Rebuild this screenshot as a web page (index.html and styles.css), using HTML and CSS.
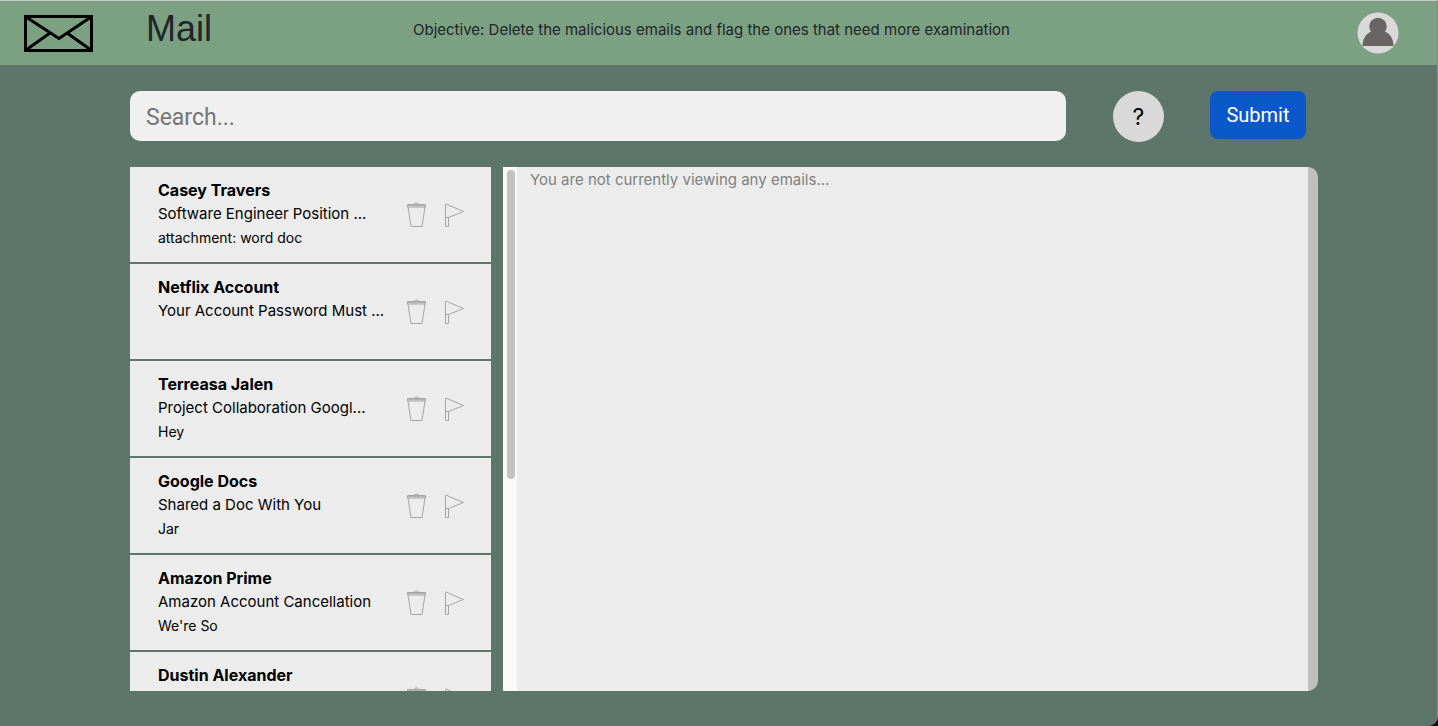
FILE: index.html
```html
<!DOCTYPE html>
<html lang="en">
<head>
<meta charset="utf-8">
<title>Mail</title>
<link rel="stylesheet" href="styles.css">
</head>
<body>
<svg class="sprite" aria-hidden="true">
  <symbol id="trash" viewBox="0 0 20 26">
    <path d="M.5 2.500H18.500V5H.5ZM7 2.500C7.500 .5 11.500 .5 12 2.500M1 5L4 24.500H15L18 5M.5 3.700H18.500"/>
  </symbol>
  <symbol id="flag" viewBox="0 0 20 26">
    <path d="M.5 2.500Q2 1 3 3L18.500 9.500L3.500 15.500V24.500H.5ZM.5 15.500H3.500"/>
  </symbol>
</svg>
<header class="topbar">
  <svg class="logo" viewBox="0 0 70 38" role="img" aria-label="Mail logo">
    <path d="M2.500 2.500H68.500V36.500H2.500Z" stroke-width="3"/>
    <path d="M3 3L36 24.500L68 3M3 36L27 19M68 36L44 19" stroke-width="3"/>
  </svg>
  <h1 class="title">Mail</h1>
  <p class="objective">Objective: Delete the malicious emails and flag the ones that need more examination</p>
  <svg class="avatar" viewBox="0 0 42 42" role="img" aria-label="Profile">
    <circle cx="21" cy="21" r="20.500" fill="#d9d9d9"/>
    <circle cx="21" cy="14.500" r="8.700" fill="#696464"/>
    <path d="M5.500 34C5.500 25 11 19.500 16 19.500H26C31 19.500 36.500 25 36.500 34Z" fill="#696464"/>
  </svg>
</header>
<main class="page">
  <form class="tools">
    <input class="search" type="text" placeholder="Search..." aria-label="Search">
    <button class="help" type="button">?</button>
    <button class="submit" type="button">Submit</button>
  </form>
  <div class="mailbox">
    <ul class="list">
      <li class="mail"><div class="text"><h2 class="sender">Casey Travers</h2><p class="subject">Software Engineer Position ...</p><p class="preview">attachment: word doc</p></div><button class="action" type="button" aria-label="Delete"><svg class="icon"><use href="#trash"/></svg></button><button class="action" type="button" aria-label="Flag"><svg class="icon"><use href="#flag"/></svg></button></li>
      <li class="mail"><div class="text"><h2 class="sender">Netflix Account</h2><p class="subject">Your Account Password Must ...</p><p class="preview"></p></div><button class="action" type="button" aria-label="Delete"><svg class="icon"><use href="#trash"/></svg></button><button class="action" type="button" aria-label="Flag"><svg class="icon"><use href="#flag"/></svg></button></li>
      <li class="mail"><div class="text"><h2 class="sender">Terreasa Jalen</h2><p class="subject">Project Collaboration Googl...</p><p class="preview">Hey</p></div><button class="action" type="button" aria-label="Delete"><svg class="icon"><use href="#trash"/></svg></button><button class="action" type="button" aria-label="Flag"><svg class="icon"><use href="#flag"/></svg></button></li>
      <li class="mail"><div class="text"><h2 class="sender">Google Docs</h2><p class="subject">Shared a Doc With You</p><p class="preview">Jar</p></div><button class="action" type="button" aria-label="Delete"><svg class="icon"><use href="#trash"/></svg></button><button class="action" type="button" aria-label="Flag"><svg class="icon"><use href="#flag"/></svg></button></li>
      <li class="mail"><div class="text"><h2 class="sender">Amazon Prime</h2><p class="subject">Amazon Account Cancellation</p><p class="preview">We're So</p></div><button class="action" type="button" aria-label="Delete"><svg class="icon"><use href="#trash"/></svg></button><button class="action" type="button" aria-label="Flag"><svg class="icon"><use href="#flag"/></svg></button></li>
      <li class="mail"><div class="text"><h2 class="sender">Dustin Alexander</h2></div><button class="action" type="button" aria-label="Delete"><svg class="icon"><use href="#trash"/></svg></button><button class="action" type="button" aria-label="Flag"><svg class="icon"><use href="#flag"/></svg></button></li>
    </ul>
    <div class="track"><div class="thumb"></div></div>
    <section class="viewer"><p class="empty">You are not currently viewing any emails...</p></section>
  </div>
</main>
</body>
</html>
```
FILE: styles.css
```css
* { box-sizing: border-box; }
html { background: #10101c; }
body {
  display: flex;
  flex-direction: column;
  height: 100vh;
  margin: 0;
  overflow: hidden;
  background: #5e756b;
  border-top: 1px solid #c5cac6;
  border-right: 1px solid #7c9087;
  border-bottom-right-radius: 10px;
  color: #000;
  font-family: Inter, "Liberation Sans", sans-serif;
  font-size: 15px;
  line-height: 24px;
}
h1, h2, p, ul { margin: 0; padding: 0; }
button { padding: 0; border: 0; font: inherit; cursor: pointer; }
.sprite { position: absolute; width: 0; height: 0; }
.topbar {
  display: flex;
  align-items: flex-start;
  flex: none;
  height: 64px;
  padding: 0 38px 0 23px;
  background: #7ba082;
  color: #212529;
}
.logo { width: 70px; height: 38px; margin-top: 13px; fill: none; stroke: #000; }
.title { width: 267px; padding: 6px 0 0 53px; font-family: "Liberation Sans", sans-serif; font-size: 36px; font-weight: 400; line-height: 44px; }
.objective { flex: 1; padding: 17px 0 0 53px; }
.avatar { flex: none; width: 42px; height: 42px; margin-top: 11px; }
.page {
  display: flex;
  flex: 1;
  flex-direction: column;
  min-height: 0;
  padding: 26px 119px 35px 130px;
}
.tools { display: flex; align-items: flex-start; padding-right: 12px; }
.search {
  flex: 1;
  min-width: 0;
  height: 50px;
  padding: 2px 16px 0;
  border: 0;
  border-radius: 10px;
  background: #f0f0f0;
  font-family: Roboto, sans-serif;
  font-size: 23px;
}
.search::placeholder { color: #757575; opacity: 1; }
.help { width: 51px; height: 51px; margin: 0 46px 0 47px; border-radius: 50%; background: #d9d9d9; color: #000; font-size: 23px; }
.submit { width: 96px; height: 48px; border-radius: 8px; background: #0b58ca; color: #fff; font-family: Roboto, sans-serif; font-size: 20px; }
.mailbox { display: flex; flex: 1; min-height: 0; margin-top: 25px; }
.list { display: flex; flex-direction: column; gap: 2px; width: 361px; margin-right: 12px; overflow: hidden; list-style: none; }
.mail { display: flex; flex: none; align-items: flex-start; height: 95px; padding: 11px 26px 0 28px; background: #ececec; }
.text { flex: 1; min-width: 0; white-space: nowrap; }
.sender { font-size: 16px; font-weight: 700; }
.preview { font-size: 14px; }
.action { width: 20px; height: 26px; margin-top: 24px; background: none; }
.action + .action { margin-left: 18px; }
.icon { display: block; width: 20px; height: 26px; fill: none; stroke: #a5a5a5; stroke-width: 1; }
.track { width: 14px; padding: 3px 2px 0 4px; background: #fafafa; }
.thumb { width: 8px; height: 309px; border-radius: 4px; background: #c1c1c1; }
.viewer { flex: 1; border-right: 10px solid #bfbfbf; border-radius: 0 10px 10px 0; background: #ececec; }
.empty { padding: 1px 0 0 13px; color: #808080; }
```
